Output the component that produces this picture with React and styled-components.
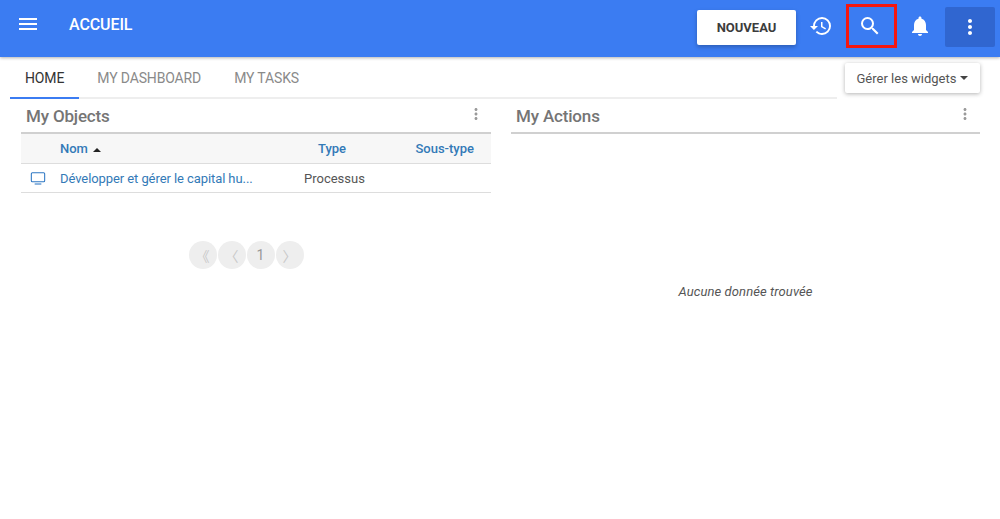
import styled, { createGlobalStyle } from "styled-components";

const GlobalStyle = createGlobalStyle`
  html, body {
    margin: 0;
    padding: 0;
    background: #fff;
    font-family: Roboto, "Liberation Sans", sans-serif;
  }
`;

const App = () => {
  return (
    <>
      <GlobalStyle />
      <Page>
        <Header>
          <MenuButton>
            <svg width="24" height="24" viewBox="0 0 24 24" fill="#fff">
              <path d="M3 18h18v-2H3v2zm0-5h18v-2H3v2zm0-7v2h18V6H3z" />
            </svg>
          </MenuButton>
          <Title>ACCUEIL</Title>
          <Actions>
            <NewButton>NOUVEAU</NewButton>
            <IconSlot>
              <svg width="24" height="24" viewBox="0 0 24 24" fill="#fff">
                <path d="M13 3a9 9 0 0 0-9 9H1l3.89 3.89.07.14L9 12H6c0-3.87 3.13-7 7-7s7 3.13 7 7-3.13 7-7 7c-1.93 0-3.68-.79-4.94-2.06l-1.42 1.42A8.954 8.954 0 0 0 13 21a9 9 0 0 0 0-18zm-1 5v5l4.28 2.54.72-1.21-3.5-2.08V8H12z" />
              </svg>
            </IconSlot>
            <SearchSlot>
              <svg width="24" height="24" viewBox="0 0 24 24" fill="#fff">
                <path d="M15.5 14h-.79l-.28-.27A6.471 6.471 0 0 0 16 9.5 6.5 6.5 0 1 0 9.5 16c1.61 0 3.09-.59 4.23-1.57l.27.28v.79l5 4.99L20.49 19l-4.99-5zm-6 0C7.01 14 5 11.99 5 9.5S7.01 5 9.5 5 14 7.01 14 9.5 11.99 14 9.5 14z" />
              </svg>
            </SearchSlot>
            <BellSlot>
              <svg width="24" height="24" viewBox="0 0 24 24" fill="#fff">
                <path d="M12 22c1.1 0 2-.9 2-2h-4c0 1.1.9 2 2 2zm6-6v-5c0-3.07-1.63-5.64-4.5-6.32V4c0-.83-.67-1.5-1.5-1.5s-1.5.67-1.5 1.5v.68C7.64 5.36 6 7.92 6 11v5l-2 2v1h16v-1l-2-2z" />
              </svg>
            </BellSlot>
            <MoreButton>
              <svg width="24" height="24" viewBox="0 0 24 24" fill="#fff">
                <path d="M12 8c1.1 0 2-.9 2-2s-.9-2-2-2-2 .9-2 2 .9 2 2 2zm0 2c-1.1 0-2 .9-2 2s.9 2 2 2 2-.9 2-2-.9-2-2-2zm0 6c-1.1 0-2 .9-2 2s.9 2 2 2 2-.9 2-2-.9-2-2-2z" />
              </svg>
            </MoreButton>
          </Actions>
        </Header>

        <TabBar>
          <Tabs>
            <Tab $active>HOME</Tab>
            <Tab>MY DASHBOARD</Tab>
            <Tab>MY TASKS</Tab>
          </Tabs>
          <WidgetButton>
            Gérer les widgets <Caret />
          </WidgetButton>
        </TabBar>

        <Widgets>
          <Widget>
            <WidgetHead>
              <WidgetTitle>My Objects</WidgetTitle>
              <Kebab />
            </WidgetHead>
            <TableHead>
              <IconCell />
              <NameCell>
                Nom <SortUp />
              </NameCell>
              <TypeCell>Type</TypeCell>
              <SubCell>Sous-type</SubCell>
            </TableHead>
            <TableRow>
              <IconCell>
                <svg width="16" height="16" viewBox="0 0 24 24" fill="none" stroke="#2f78c4" strokeWidth="1.6">
                  <rect x="2" y="4" width="20" height="13.5" rx="1.5" />
                  <path d="M7 21h10" />
                </svg>
              </IconCell>
              <NameCell>
                <RowLink>Développer et gérer le capital hu...</RowLink>
              </NameCell>
              <TypeValue>Processus</TypeValue>
              <SubCell />
            </TableRow>
            <Pager>
              <PageDot>《</PageDot>
              <PageDot>〈</PageDot>
              <PageNumber>1</PageNumber>
              <PageDot>〉</PageDot>
            </Pager>
          </Widget>
          <Widget>
            <WidgetHead>
              <WidgetTitle>My Actions</WidgetTitle>
              <Kebab />
            </WidgetHead>
            <Empty>Aucune donnée trouvée</Empty>
          </Widget>
        </Widgets>
      </Page>
    </>
  );
};

const Kebab = () => (
  <KebabIcon width="18" height="18" viewBox="0 0 24 24" fill="#9a9a9a">
    <path d="M12 8c1.1 0 2-.9 2-2s-.9-2-2-2-2 .9-2 2 .9 2 2 2zm0 2c-1.1 0-2 .9-2 2s.9 2 2 2 2-.9 2-2-.9-2-2-2zm0 6c-1.1 0-2 .9-2 2s.9 2 2 2 2-.9 2-2-.9-2-2-2z" />
  </KebabIcon>
);

const Page = styled.div`
  width: 1000px;
  height: 519px;
  overflow: hidden;
  background: #fff;
`;

const Header = styled.header`
  height: 57px;
  background: #3b7cf2;
  display: flex;
  align-items: flex-start;
  box-shadow: 0 1px 3px rgba(0, 0, 0, 0.3);
  position: relative;
`;

const MenuButton = styled.div`
  width: 24px;
  height: 24px;
  margin: 12px 0 0 16px;
`;

const Title = styled.div`
  margin: 16px 0 0 29px;
  color: #fff;
  font-size: 16px;
  font-weight: 500;
  line-height: 18px;
  letter-spacing: -0.1px;
`;

const Actions = styled.div`
  margin-left: auto;
  display: flex;
  align-items: flex-start;
  padding-right: 5px;
`;

const NewButton = styled.button`
  width: 99px;
  height: 35px;
  margin: 10px 1px 0 0;
  border: none;
  border-radius: 2px;
  background: #fff;
  color: #3c3c3c;
  font-family: inherit;
  font-size: 13px;
  font-weight: 700;
  box-shadow: 0 2px 4px rgba(0, 0, 0, 0.25);
`;

const IconSlot = styled.div`
  width: 48px;
  height: 52px;
  display: flex;
  align-items: center;
  justify-content: center;
`;

const SearchSlot = styled(IconSlot)`
  width: 51px;
  height: 44px;
  margin: 4px 0 0 1px;
  padding-right: 3px;
  box-sizing: border-box;
  border: 3px solid #f5170f;
`;

const BellSlot = styled(IconSlot)`
  padding-right: 2px;
  box-sizing: border-box;
`;

const MoreButton = styled(IconSlot)`
  width: 50px;
  height: 40px;
  margin-top: 7px;
  background: #3066d0;
  border-radius: 2px;
`;

const TabBar = styled.div`
  height: 42px;
  display: flex;
  align-items: flex-start;
  justify-content: space-between;
  padding: 0 20px 0 10px;
  position: relative;
`;

const Tabs = styled.div`
  width: 827px;
  height: 42px;
  box-sizing: border-box;
  display: flex;
  border-bottom: 2px solid #eee;
`;

const Tab = styled.div`
  height: 42px;
  box-sizing: border-box;
  padding: 13px 15px 0;
  margin-right: 3px;
  font-size: 14px;
  line-height: 16px;
  letter-spacing: -0.01em;
  color: ${(p) => (p.$active ? "#333" : "#8a8a8a")};
  border-bottom: 2px solid ${(p) => (p.$active ? "#3b7cf2" : "transparent")};
`;

const WidgetButton = styled.div`
  width: 135px;
  height: 30px;
  margin-top: 6px;
  box-sizing: border-box;
  display: flex;
  align-items: center;
  justify-content: center;
  gap: 4px;
  background: #fff;
  color: #555;
  font-size: 13px;
  border-radius: 2px;
  box-shadow: 0 1px 4px rgba(0, 0, 0, 0.3);
`;

const Caret = styled.span`
  width: 0;
  height: 0;
  border-left: 4px solid transparent;
  border-right: 4px solid transparent;
  border-top: 4px solid #444;
`;

const Widgets = styled.div`
  display: grid;
  grid-template-columns: 470px 469px;
  column-gap: 20px;
  padding-left: 21px;
`;

const Widget = styled.section`
  display: flex;
  flex-direction: column;
`;

const WidgetHead = styled.div`
  height: 35px;
  box-sizing: border-box;
  display: flex;
  align-items: flex-start;
  justify-content: space-between;
  padding: 7px 6px 0 5px;
  border-bottom: 2px solid #d0d0d0;
`;

const WidgetTitle = styled.div`
  font-size: 17px;
  font-weight: 500;
  line-height: 20px;
  letter-spacing: -0.01em;
  color: #757575;
`;

const KebabIcon = styled.svg`
  margin-top: -1px;
`;

const TableHead = styled.div`
  height: 30px;
  box-sizing: border-box;
  display: flex;
  align-items: center;
  background: #f7f7f7;
  border-bottom: 1px solid #ddd;
  color: #337ab7;
  font-size: 13px;
  font-weight: 500;
  line-height: 16px;
`;

const TableRow = styled.div`
  height: 29px;
  box-sizing: border-box;
  display: flex;
  align-items: center;
  border-bottom: 1px solid #ddd;
  font-size: 13px;
`;

const IconCell = styled.div`
  width: 40px;
  display: flex;
  justify-content: center;
  margin-left: -3px;
  margin-right: 3px;
`;

const NameCell = styled.div`
  width: 243px;
  display: flex;
  align-items: center;
  gap: 5px;
  margin-left: -1px;
  margin-right: 1px;
`;

const RowLink = styled.span`
  color: #337ab7;
  letter-spacing: -0.08px;
`;

const SortUp = styled.span`
  width: 0;
  height: 0;
  margin-top: 3px;
  border-left: 4px solid transparent;
  border-right: 4px solid transparent;
  border-bottom: 4px solid #222;
`;

const TypeCell = styled.div`
  width: 98px;
  padding-left: 14px;
  box-sizing: border-box;
`;

const TypeValue = styled.div`
  width: 98px;
  color: #555;
`;

const SubCell = styled.div`
  flex: 1;
  text-align: right;
  padding-right: 17px;
`;

const Pager = styled.div`
  display: flex;
  justify-content: center;
  gap: 1px;
  margin-top: 48px;
  padding-right: 20px;
`;

const PageDot = styled.div`
  width: 28px;
  height: 28px;
  border-radius: 50%;
  background: #eee;
  display: flex;
  align-items: center;
  justify-content: center;
  color: #c8c8c8;
  font-size: 14px;
  font-family: "Noto Sans CJK SC", Roboto, sans-serif;
`;

const PageNumber = styled(PageDot)`
  color: #999;
  font-family: Roboto, sans-serif;
`;

const Empty = styled.div`
  margin-top: 150px;
  text-align: center;
  font-size: 13px;
  font-style: italic;
  letter-spacing: 0.1px;
  color: #555;
`;

export default App;
